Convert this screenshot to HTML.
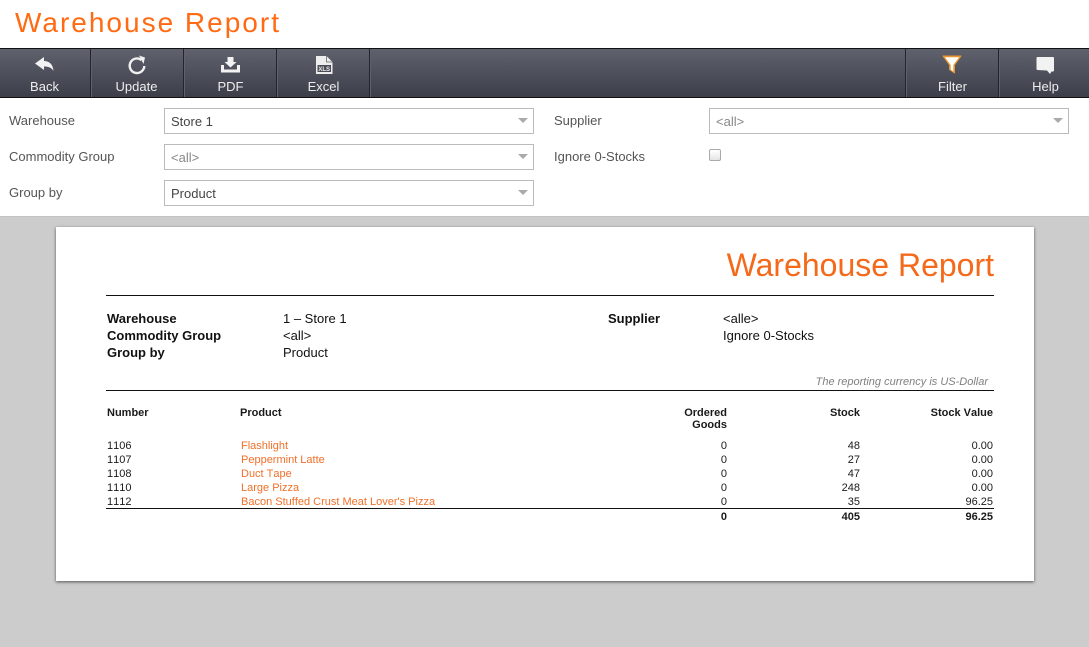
<!DOCTYPE html>
<html><head><meta charset="utf-8"><style>
html,body{margin:0;padding:0;width:1089px;height:647px;overflow:hidden;background:#fff;font-family:"Liberation Sans",sans-serif}
.a{position:absolute;white-space:nowrap;line-height:14px}
.tb{position:absolute;left:0;top:48px;width:1089px;height:50px;box-sizing:border-box;border-top:1px solid #111;border-bottom:1px solid #111;background:linear-gradient(#5f626d,#3c3f4a)}
.sep{position:absolute;top:49px;width:1px;height:48px;background:#23252c;box-shadow:1px 0 0 #5f626c}
.bl{position:absolute;top:80px;width:93px;text-align:center;color:#eee;font-size:13px;line-height:14px;font-kerning:none}
.lb{position:absolute;left:9px;font-size:13px;line-height:14px;color:#555;margin-top:1px}
.sel{position:absolute;box-sizing:border-box;height:26px;border:1px solid #bbb;background:#fff;font-size:13px;line-height:25px;padding-left:6px;color:#444}
.sel.g{color:#888}
.sel i{position:absolute;right:5px;top:9px;width:0;height:0;border-left:5px solid transparent;border-right:5px solid transparent;border-top:5px solid #aaa}
.r{position:absolute;font-size:11px;line-height:14px;color:#1a1a1a;white-space:nowrap;font-kerning:none;margin-top:1px}
.o{color:#f0702a}
.n{text-align:right}
.h{font-weight:bold}
.m{position:absolute;font-size:13px;line-height:14px;color:#111;white-space:nowrap;margin-top:1px}
</style></head><body>
<div class="a" style="left:15px;top:5px;font-size:28px;line-height:36px;letter-spacing:2px;color:#ff6a13">Warehouse Report</div>
<div class="tb"></div>
<div class="sep" style="left:90px"></div><div class="sep" style="left:183px"></div><div class="sep" style="left:276px"></div><div class="sep" style="left:369px"></div><div class="sep" style="left:905px"></div><div class="sep" style="left:998px"></div>

<svg style="position:absolute;left:0;top:0" width="1089" height="98" viewBox="0 0 1089 98">
<path d="M35 63.500 44 57v4c5 0 9 3 9.500 10-2-3.500-5-4.500-9.500-4.500V70z" fill="#f2f2f2"/>
<path d="M141.500 60A7.300 7.300 0 1 0 144.300 66" fill="none" stroke="#f0f0f0" stroke-width="2.400"/>
<path d="M139 55.500 145 57.500 143.500 64z" fill="#f0f0f0"/>
<path d="M227.500 57h6v5h3l-6 5.500-6-5.500h3z" fill="#f2f2f2"/>
<path d="M221 65h3v4.500h13V65h3v7.500h-19z" fill="#f2f2f2"/>
<path d="M316 56h10.500l6 6v12h-16.500z" fill="#eee"/>
<path d="M326.500 56v6h6" fill="none" stroke="#666" stroke-width=".8"/>
<rect x="317.500" y="65" width="13.500" height="7" fill="#4a4d56"/>
<text x="324.200" y="71" font-family="Liberation Sans" font-size="6" font-weight="bold" text-anchor="middle" fill="#eee">XLS</text>
<path d="M943 56h18l-6.500 9v8l-5-3.500V65z" fill="#e8962f" stroke="#e8962f" stroke-width="1" stroke-linejoin="round"/>
<path d="M945.500 57.500h13L953 65v6l-2-1.500V65z" fill="#fff" stroke="#fff" stroke-width=".6"/>
<path d="M1038 57h15q1 0 1 1v12.500q0 1-1 1h-1.500l-1.500 2.500-3-3.500-9.500-.500q-1 0-1-1V58q0-1 1-1z" fill="#f2f2f2"/>
</svg>

<div class="bl" style="left:-2px">Back</div>
<div class="bl" style="left:90px">Update</div>
<div class="bl" style="left:184px">PDF</div>
<div class="bl" style="left:277px">Excel</div>
<div class="bl" style="left:906px">Filter</div>
<div class="bl" style="left:999px">Help</div>

<div class="lb" style="top:113px">Warehouse</div>
<div class="lb" style="top:149px">Commodity Group</div>
<div class="lb" style="top:185px">Group by</div>
<div class="lb" style="left:554px;top:113px">Supplier</div>
<div class="lb" style="left:554px;top:149px">Ignore 0-Stocks</div>
<div class="sel" style="left:164px;top:108px;width:370px">Store 1<i></i></div>
<div class="sel g" style="left:164px;top:144px;width:370px">&lt;all&gt;<i></i></div>
<div class="sel" style="left:164px;top:180px;width:370px">Product<i></i></div>
<div class="sel g" style="left:709px;top:108px;width:360px">&lt;all&gt;<i></i></div>
<div style="position:absolute;left:709px;top:149px;width:12px;height:12px;box-sizing:border-box;border:1px solid #aaa;border-radius:2px;background:linear-gradient(#fff,#e4e4e4)"></div>

<div style="position:absolute;left:0;top:216px;width:1089px;height:431px;background:#ccc;border-top:1px solid #c2c2c2;box-sizing:border-box"></div>
<div style="position:absolute;left:56px;top:227px;width:978px;height:354px;background:#fff;box-shadow:0 1px 3px rgba(0,0,0,.6)"></div>

<div class="a" style="right:95px;top:246px;font-size:32px;line-height:38px;color:#f4691a">Warehouse Report</div>
<div style="position:absolute;left:106px;top:295px;width:888px;height:1px;background:#111"></div>
<div class="m" style="left:107px;top:311px;font-weight:bold">Warehouse</div>
<div class="m" style="left:107px;top:328px;font-weight:bold">Commodity Group</div>
<div class="m" style="left:107px;top:345px;font-weight:bold">Group by</div>
<div class="m" style="left:283px;top:311px">1 – Store 1</div>
<div class="m" style="left:283px;top:328px">&lt;all&gt;</div>
<div class="m" style="left:283px;top:345px">Product</div>
<div class="m" style="left:608px;top:311px;font-weight:bold">Supplier</div>
<div class="m" style="left:723px;top:311px">&lt;alle&gt;</div>
<div class="m" style="left:723px;top:328px">Ignore 0-Stocks</div>
<div class="r" style="right:101px;top:374px;color:#808080;font-style:italic">The reporting currency is US-Dollar</div>
<div style="position:absolute;left:106px;top:390px;width:888px;height:1px;background:#111"></div>

<div class="r h" style="left:107px;top:405px">Number</div>
<div class="r h" style="left:240px;top:405px">Product</div>
<div class="r h n" style="right:362px;top:406px;line-height:12px">Ordered<br>Goods</div>
<div class="r h n" style="right:229px;top:405px">Stock</div>
<div class="r h n" style="right:96px;top:405px">Stock Value</div>

<div class="r" style="left:107px;top:438px">1106</div><div class="r o" style="left:241px;top:438px">Flashlight</div><div class="r" style="right:362px;top:438px">0</div><div class="r" style="right:229px;top:438px">48</div><div class="r" style="right:96px;top:438px">0.00</div>
<div class="r" style="left:107px;top:452px">1107</div><div class="r o" style="left:241px;top:452px">Peppermint Latte</div><div class="r" style="right:362px;top:452px">0</div><div class="r" style="right:229px;top:452px">27</div><div class="r" style="right:96px;top:452px">0.00</div>
<div class="r" style="left:107px;top:466px">1108</div><div class="r o" style="left:241px;top:466px">Duct Tape</div><div class="r" style="right:362px;top:466px">0</div><div class="r" style="right:229px;top:466px">47</div><div class="r" style="right:96px;top:466px">0.00</div>
<div class="r" style="left:107px;top:480px">1110</div><div class="r o" style="left:241px;top:480px">Large Pizza</div><div class="r" style="right:362px;top:480px">0</div><div class="r" style="right:229px;top:480px">248</div><div class="r" style="right:96px;top:480px">0.00</div>
<div class="r" style="left:107px;top:494px">1112</div><div class="r o" style="left:241px;top:494px">Bacon Stuffed Crust Meat Lover's Pizza</div><div class="r" style="right:362px;top:494px">0</div><div class="r" style="right:229px;top:494px">35</div><div class="r" style="right:96px;top:494px">96.25</div>
<div style="position:absolute;left:106px;top:508px;width:888px;height:1px;background:#111"></div>
<div class="r h" style="right:362px;top:509px">0</div><div class="r h" style="right:229px;top:509px">405</div><div class="r h" style="right:96px;top:509px">96.25</div>
</body></html>
